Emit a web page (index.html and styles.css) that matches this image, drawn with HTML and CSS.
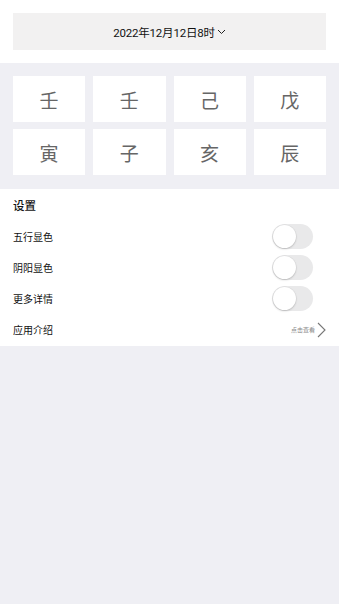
FILE: index.html
```html
<!DOCTYPE html>
<html lang="zh">
<head>
<meta charset="utf-8">
<link rel="stylesheet" href="styles.css">
</head>
<body>
<header class="top">
  <div class="date-box">
    <span class="date-text">2022年12月12日8时</span>
    <svg class="caret" width="9" height="6" viewBox="0 0 9 6"><path d="M1 1 L4.5 4.5 L8 1" fill="none" stroke="#222" stroke-width="1"/></svg>
  </div>
</header>
<section class="pillars">
  <div class="cell">壬</div>
  <div class="cell">壬</div>
  <div class="cell">己</div>
  <div class="cell">戊</div>
  <div class="cell">寅</div>
  <div class="cell">子</div>
  <div class="cell">亥</div>
  <div class="cell">辰</div>
</section>
<section class="settings">
  <div class="title">设置</div>
  <div class="row"><span class="label">五行显色</span><span class="toggle"><span class="knob"></span></span></div>
  <div class="row"><span class="label">阴阳显色</span><span class="toggle"><span class="knob"></span></span></div>
  <div class="row"><span class="label">更多详情</span><span class="toggle"><span class="knob"></span></span></div>
  <div class="row"><span class="label">应用介绍</span><span class="more"><span class="hint">点击查看</span><svg class="chev" width="9" height="16" viewBox="0 0 9 16"><path d="M1 1 L8 8 L1 15" fill="none" stroke="#777" stroke-width="1.1"/></svg></span></div>
</section>
</body>
</html>
```

FILE: styles.css
```css
* { box-sizing: border-box; }
html, body { margin: 0; padding: 0; }
body {
  background: #efeff4;
  font-family: "Noto Sans CJK SC", "Noto Sans", sans-serif;
  color: #111;
  width: 339px;
  min-height: 604px;
}
.top {
  background: #fff;
  padding: 13px 13px 13px 13px;
}
.date-box {
  height: 37px;
  background: #f2f1f1;
  display: flex;
  align-items: center;
  justify-content: center;
  gap: 2px;
}
.date-text {
  font-family: Roboto, "Noto Sans CJK SC", sans-serif;
  font-size: 11.5px;
  color: #111;
  letter-spacing: -0.2px;
}
.caret { margin-top: 1px; }
.pillars {
  padding: 13px 13px 14px 13px;
  display: grid;
  grid-template-columns: repeat(4, 1fr);
  column-gap: 8px;
  row-gap: 7px;
}
.cell {
  height: 46px;
  background: #fff;
  display: flex;
  align-items: center;
  justify-content: center;
  font-size: 19px;
  color: #666;
}
.settings {
  background: #fff;
  padding: 0 13px 1px 13px;
}
.title {
  height: 32px;
  display: flex;
  align-items: center;
  font-size: 11.5px;
  font-weight: 500;
  color: #111;
}
.row {
  height: 31px;
  display: flex;
  align-items: center;
  justify-content: space-between;
}
.label {
  font-size: 10px;
  color: #111;
}
.toggle {
  width: 41px;
  height: 25px;
  border-radius: 13px;
  background: #e9e9ea;
  margin-right: 13px;
  display: flex;
  align-items: center;
  padding: 1px;
}
.knob {
  width: 23px;
  height: 23px;
  border-radius: 50%;
  background: #fff;
  box-shadow: 0 1px 2px rgba(0,0,0,0.18), 0 0 0 0.5px rgba(0,0,0,0.06);
}
.more {
  display: flex;
  align-items: center;
  gap: 2px;
}
.hint {
  font-size: 6px;
  color: #888;
}
.chev { display: block; }
```
